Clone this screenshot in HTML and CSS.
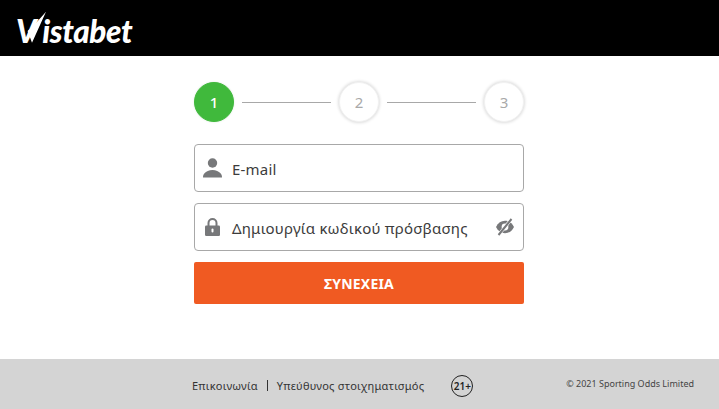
FILE: index.html
```html
<!DOCTYPE html>
<html lang="en">
<head>
    <meta charset="UTF-8">
    <meta name="viewport" content="width=device-width, initial-scale=1.0">
    <title>Vistabet</title>
    <link rel="stylesheet" href="styles.css">
</head>
<body>
    <header class="topbar">
        <span class="logo"><span class="logo-v">V</span>istabet</span>
    </header>

    <main class="content">
        <div class="stepper">
            <div class="step active">1</div>
            <div class="step-line"></div>
            <div class="step">2</div>
            <div class="step-line"></div>
            <div class="step">3</div>
        </div>

        <form class="form">
            <label class="field">
                <svg class="field-icon" width="20" height="20" viewBox="0 0 20 20">
                    <circle cx="9.500" cy="5" r="4.700" fill="#77787a"/>
                    <path d="M0 19.500c0-1.500.3-3 1.500-4.200C3.200 13.500 6 12 9.500 12s6.300 1.500 8 3.300c1.200 1.200 1.500 2.700 1.500 4.200z" fill="#77787a"/>
                </svg>
                <span class="field-text">E-mail</span>
            </label>
            <label class="field">
                <svg class="field-icon" width="20" height="20" viewBox="0 0 20 20">
                    <path d="M5.500 9V6a4 4 0 0 1 8 0v3" fill="none" stroke="#77787a" stroke-width="2"/>
                    <rect x="2" y="8.500" width="15" height="10.500" rx="1.200" fill="#77787a"/>
                    <rect x="8.500" y="11.500" width="2" height="4" rx="1" fill="#fff"/>
                </svg>
                <span class="field-text">Δημιουργία κωδικού πρόσβασης</span>
                <svg class="eye-icon" width="18" height="18" viewBox="0 0 18 18">
                    <path d="M0 9c2-4 5-6.200 9-6.200s7 2.200 9 6.200c-2 4-5 6.200-9 6.200S2 13 0 9z" fill="#77787a"/>
                    <circle cx="9" cy="9" r="3.400" fill="#fff"/>
                    <path d="M2.500 17 15.500 1" stroke="#fff" stroke-width="3.200"/>
                    <path d="M2.500 17 15.500 1" stroke="#77787a" stroke-width="2"/>
                </svg>
            </label>
            <button type="button" class="submit">ΣΥΝΕΧΕΙΑ</button>
        </form>
    </main>

    <footer class="footer">
        <div class="footer-links">
            <a href="#">Επικοινωνία</a>
            <span class="sep"></span>
            <a href="#">Υπεύθυνος στοιχηματισμός</a>
        </div>
        <div class="age">21+</div>
        <div class="copyright">© 2021 Sporting Odds Limited</div>
    </footer>
</body>
</html>
```

FILE: styles.css
```css
html, body {
    height: 100%;
}
body {
    margin: 0;
    display: flex;
    flex-direction: column;
    font-family: "Noto Sans", Arial, sans-serif;
    background-color: #ffffff;
    color: #3c3c3c;
}
.topbar {
    height: 56px;
    background-color: #000000;
    display: flex;
    align-items: center;
    padding-left: 16px;
    flex-shrink: 0;
}
.logo {
    position: relative;
    font-family: Lato, sans-serif;
    font-size: 31.500px;
    font-weight: 900;
    font-style: italic;
    letter-spacing: -0.4px;
    color: #ffffff;
    line-height: 1;
    padding-top: 7px;
}
.logo-v {
    margin-right: 6px;
}
/* long arm of the V */
.logo::before {
    content: "";
    position: absolute;
    left: 10px;
    top: 3px;
    width: 20px;
    height: 32px;
    background: #ffffff;
    clip-path: polygon(100% 0, 30% 97%, 8% 60%, 50% 35%);
}
.content {
    flex: 1;
    display: flex;
    flex-direction: column;
    align-items: center;
    padding-top: 26px;
    padding-right: 1px;
}
.stepper {
    width: 330px;
    display: flex;
    align-items: center;
}
.step {
    width: 40px;
    height: 40px;
    box-sizing: border-box;
    flex-shrink: 0;
    border: 1px solid #f2f2f2;
    border-radius: 50%;
    box-shadow: 0 0 3px 1px #dedede;
    display: flex;
    align-items: center;
    justify-content: center;
    font-size: 15px;
    color: #a9a9a9;
    background: #ffffff;
}
.step.active {
    background: #40b93c;
    border-color: #40b93c;
    box-shadow: 0 0 2px #d8e8d8;
    color: #ffffff;
    font-weight: 500;
}
.step-line {
    width: 89px;
    height: 1px;
    margin: 0 8px;
    background-color: #a8a8a8;
}
.form {
    width: 330px;
    margin-top: 22px;
    display: flex;
    flex-direction: column;
}
.field {
    height: 46px;
    border: 1px solid #a8a8a8;
    border-radius: 4px;
    display: flex;
    align-items: center;
    padding: 0 9px 0 8px;
    margin-bottom: 11px;
}
.field-icon {
    flex-shrink: 0;
    margin-right: 9px;
}
.field-text {
    flex: 1;
    padding-top: 2px;
    font-size: 15px;
    color: #3c3c3c;
    letter-spacing: 0.2px;
    white-space: nowrap;
}
.eye-icon {
    flex-shrink: 0;
}
.submit {
    height: 42px;
    border: none;
    border-radius: 2px;
    background-color: #f05a22;
    color: #ffffff;
    font-family: "Noto Sans", Arial, sans-serif;
    font-size: 14px;
    font-weight: 700;
    letter-spacing: 0.2px;
    cursor: pointer;
}
.footer {
    height: 47px;
    flex-shrink: 0;
    background-color: #d4d4d4;
    display: flex;
    align-items: center;
    padding: 3px 25px 0 192px;
    font-size: 11px;
    letter-spacing: 0.25px;
}
.footer-links {
    display: flex;
    align-items: center;
}
.footer-links a {
    color: #333333;
    text-decoration: none;
}
.sep {
    width: 1px;
    height: 11px;
    margin: 0 9px 0 9px;
    background-color: #333333;
}
.age {
    width: 22px;
    height: 22px;
    box-sizing: border-box;
    margin-left: 27px;
    border: 1.500px solid #222222;
    border-radius: 50%;
    display: flex;
    align-items: center;
    justify-content: center;
    font-size: 10px;
    font-weight: 600;
    letter-spacing: 0;
    color: #222222;
}
.copyright {
    margin-left: auto;
    margin-bottom: 5px;
    font-size: 9px;
    letter-spacing: 0;
    color: #444444;
}
```
